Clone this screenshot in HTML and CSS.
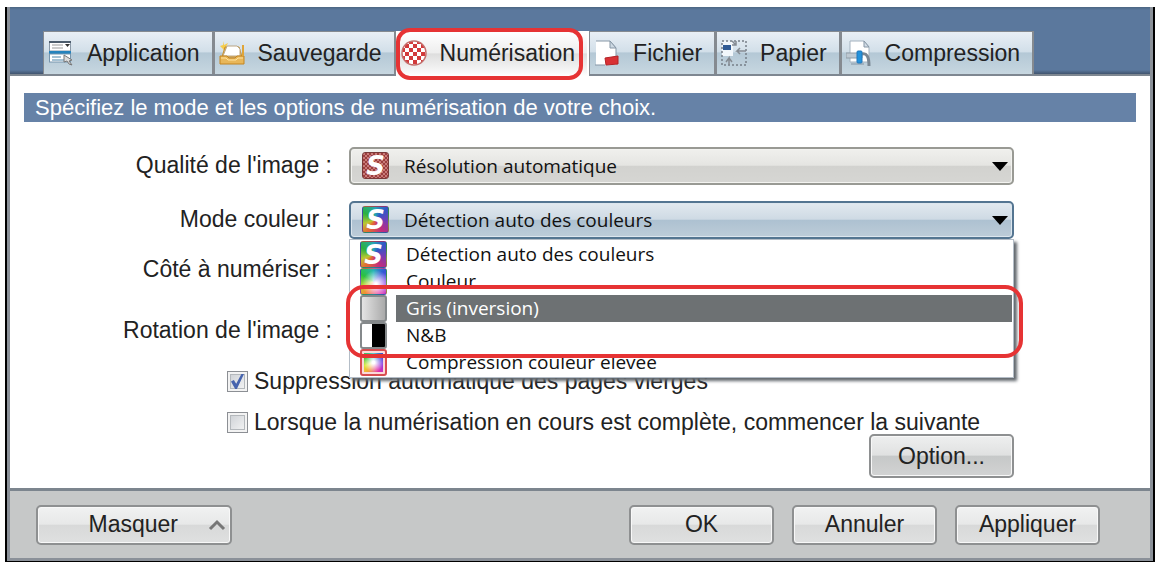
FILE: index.html
```
<!DOCTYPE html>
<html lang="fr">
<head>
    <meta charset="UTF-8">
    <meta name="viewport" content="width=device-width, initial-scale=1.0">
    <title>Numérisation</title>
    <link rel="stylesheet" href="styles.css">
</head>
<body>
    <main class="window">
        <nav class="tabs" role="tablist">
            <button type="button" class="tab" role="tab">
                <svg class="tab-icon" viewBox="0 0 26 26">
                    <rect x="1.500" y="2" width="21" height="9" fill="#fff" stroke="#8a98a6"/>
                    <path d="M1 2H23" stroke="#4c5c6c" stroke-width="2"/>
                    <path d="M4 5H15M4 8H15" stroke="#999"/>
                    <path d="M17 4h5l-2.500 3z" fill="#333"/>
                    <rect x="1" y="11" width="22" height="5" fill="#2583bd"/>
                    <rect x="1.500" y="14" width="21" height="8" fill="#fff" stroke="#7795ad"/>
                    <path d="M4 17H13M4 20H18" stroke="#4c84a8"/>
                    <path d="M16 15l8 5-3 1 3 4-3-1-2-3-3 1z" fill="#ddd" stroke="#777"/>
                </svg>
                Application
            </button>
            <button type="button" class="tab" role="tab">
                <svg class="tab-icon" viewBox="0 0 26 26">
                    <path d="M4 1l1 4 4-2-2 4 3 2-5 1-4-4 3-1z" fill="#f5cc4c"/>
                    <path d="M3 17L6 7H20L23 17Z" fill="#eebc52" stroke="#c88e2b"/>
                    <path d="M4 16L8 6H18L21 9V16Z" fill="#fff" stroke="#bba684"/>
                    <path d="M1 16H8L10 18H16L18 16H25V24H1Z" fill="#e8b75a" stroke="#c48521"/>
                    <path d="M2 18H7L9 20H17L19 18H24" fill="none" stroke="#ffe3a0"/>
                    <path d="M24 5V16" stroke="#e0a538" stroke-width="2"/>
                </svg>
                Sauvegarde
            </button>
            <button type="button" class="tab active" role="tab" aria-selected="true">
                <svg class="tab-icon" viewBox="0 0 26 26">
                    <defs>
                        <pattern id="checker" width="8" height="8" patternUnits="userSpaceOnUse">
                            <rect width="8" height="8" fill="#fff"/>
                            <rect width="4" height="4" fill="#d23a3b"/>
                            <rect x="4" y="4" width="4" height="4" fill="#d23a3b"/>
                        </pattern>
                    </defs>
                    <circle cx="13" cy="13" r="12" fill="url(#checker)" stroke="#c4706e" stroke-width="1.500"/>
                </svg>
                Numérisation
                <span class="ring ring-tab"></span>
            </button>
            <button type="button" class="tab" role="tab">
                <svg class="tab-icon" viewBox="0 0 26 26">
                    <path d="M2 1H16L22 8V25H2Z" fill="#fff"/>
                    <path d="M2 1H16L22 8V17M1 25H11" fill="none" stroke="#8797a6"/>
                    <path d="M16 1V8H22Z" fill="#cdd9e3" stroke="#8797a6"/>
                    <path d="M11 18L24 16V24L12 25Z" fill="#d93135" stroke="#b32327"/>
                </svg>
                Fichier
            </button>
            <button type="button" class="tab" role="tab">
                <svg class="tab-icon" viewBox="0 0 26 26">
                    <rect x="1" y="1" width="11" height="15" fill="#f2f7fb"/>
                    <path d="M1 1H25V25H1Z" fill="none" stroke="#777f88" stroke-width="1.500" stroke-dasharray="2 2"/>
                    <rect x="2" y="5" width="8" height="5" fill="#315b94"/>
                    <path d="M11 1l4 4M15 1v4h-4M25 11h-9l3-3M16 11l3 3M8 25v-7l-3 4M8 18l3 4" fill="none" stroke="#858b92" stroke-width="1.500"/>
                </svg>
                Papier
            </button>
            <button type="button" class="tab" role="tab">
                <svg class="tab-icon" viewBox="0 0 26 26">
                    <path d="M4 1H18L23 7V22H4Z" fill="#fff" stroke="#a4b2bf"/>
                    <path d="M18 1V7H23Z" fill="#d3dde7" stroke="#8797a6"/>
                    <path d="M5 24H18" stroke="#8494a3"/>
                    <path d="M0 13H16V18H0Z" fill="#bec9d2" stroke="#919da8"/>
                    <path d="M16 14q7-2 7 12" fill="none" stroke="#7a8793" stroke-width="3"/>
                    <rect x="11" y="11" width="5" height="12" rx="1" fill="#2493dc" stroke="#2176ba"/>
                </svg>
                Compression
            </button>
        </nav>

        <section class="panel">
            <h1 class="banner">Spécifiez le mode et les options de numérisation de votre choix.</h1>

            <form class="form" id="scanForm">
                <div class="fields">
                    <label class="label" for="quality">Qualité de l'image :</label>
                    <div class="combo">
                        <span class="icon icon-quality">S</span>
                        <select id="quality" class="select">
                            <option>Résolution automatique</option>
                        </select>
                        <span class="arrow"></span>
                    </div>

                    <label class="label" for="mode">Mode couleur :</label>
                    <div class="combo open">
                        <span class="icon icon-auto">S</span>
                        <select id="mode" class="select">
                            <option>Détection auto des couleurs</option>
                        </select>
                        <span class="arrow"></span>
                        <ul class="menu" role="listbox">
                            <li class="item" role="option"><span class="icon icon-auto">S</span><span class="item-text">Détection auto des couleurs</span></li>
                            <li class="item" role="option"><span class="icon icon-color"></span><span class="item-text">Couleur</span></li>
                            <li class="item selected" role="option"><span class="icon icon-gray"></span><span class="item-text">Gris (inversion)</span></li>
                            <li class="item" role="option"><span class="icon icon-bw"></span><span class="item-text">N&amp;B</span></li>
                            <li class="item" role="option"><span class="icon icon-high"></span><span class="item-text">Compression couleur élevée</span></li>
                        </ul>
                        <span class="ring ring-menu"></span>
                    </div>

                    <label class="label" for="side">Côté à numériser :</label>
                    <div class="combo">
                        <select id="side" class="select"></select>
                    </div>

                    <label class="label" for="rotation">Rotation de l'image :</label>
                    <div class="combo">
                        <select id="rotation" class="select"></select>
                    </div>
                </div>

                <div class="check">
                    <input type="checkbox" id="blank" checked>
                    <label for="blank">Suppression automatique des pages vierges</label>
                </div>
                <div class="check">
                    <input type="checkbox" id="next">
                    <label for="next">Lorsque la numérisation en cours est complète, commencer la suivante</label>
                </div>

                <button type="button" class="btn btn-option">Option...</button>
            </form>
        </section>

        <footer class="footer">
            <button type="button" class="btn btn-hide">
                Masquer
                <svg class="chevron" viewBox="0 0 18 12"><path d="M2 10L9 3L16 10" fill="none" stroke="#777" stroke-width="3"/></svg>
            </button>
            <div class="actions">
                <button type="button" class="btn">OK</button>
                <button type="button" class="btn">Annuler</button>
                <button type="button" class="btn">Appliquer</button>
            </div>
        </footer>
    </main>
</body>
</html>
```
FILE: styles.css
```
* {
    box-sizing: border-box;
}

body {
    font-family: "Liberation Sans", Arial, sans-serif;
    font-size: 23px;
    color: #222;
    background-color: #fff;
    margin: 0;
    padding: 7px 4px 0 5px;
}

button {
    font: inherit;
    color: inherit;
}

.window {
    border: 2px solid #000;
    border-top: none;
    box-shadow: inset 0 0 0 3px #8b9199;
    padding: 0 3px 3px;
}

/* tabs */
.tabs {
    display: flex;
    align-items: flex-end;
    height: 69px;
    padding-left: 33px;
    background: linear-gradient(#4b6683, #5b789d 3px, #5b789d 63px, #41546e 67px);
    border-bottom: 2px solid #7e8791;
}

.tab {
    position: relative;
    display: flex;
    align-items: center;
    gap: 13px;
    height: 43px;
    padding: 0 12px 0 4px;
    border: 1px solid #858a90;
    border-right-width: 2px;
    border-bottom: none;
    background: linear-gradient(#e9eff5, #d2dfe9 47%, #b4c8d6 50%, #c7d7e0);
}

.tab.active {
    height: 45px;
    margin-bottom: -2px;
    padding-bottom: 2px;
    border-color: #fff;
    background: linear-gradient(#fff, #eee 47%, #dedede 50%, #f7f7f7 90%, #fff);
}

.tab-icon {
    width: 26px;
    height: 26px;
}

/* red highlight frames */
.ring {
    position: absolute;
    border: 4px solid #e63334;
    pointer-events: none;
}

.ring-tab {
    inset: -4px 4px -4px -1px;
    border-radius: 14px;
}

.ring-menu {
    top: 84px;
    left: -3px;
    right: -9px;
    height: 73px;
    border-radius: 18px;
    z-index: 3;
}

/* panel */
.panel {
    background-color: #fff;
    padding: 17px 14px 10px;
}

.banner {
    margin: 0 0 25px;
    padding: 0 11px;
    font-size: 22px;
    font-weight: normal;
    line-height: 29px;
    color: #fff;
    background-color: #6682a7;
}

.form {
    display: flex;
    flex-direction: column;
    padding-right: 122px;
}

.fields {
    display: grid;
    grid-template-columns: 308px 1fr;
    grid-template-rows: 54px 50px 61px 49px;
    column-gap: 17px;
    align-items: start;
}

.label {
    text-align: right;
    line-height: 36px;
}

.combo {
    position: relative;
    font-family: "Open Sans", "Noto Sans", sans-serif;
    font-size: 19px;
}

.select {
    display: block;
    appearance: none;
    width: 100%;
    height: 38px;
    padding: 0 53px;
    border: 2px solid #999a94;
    border-radius: 5px;
    font: inherit;
    color: #111;
    background: linear-gradient(#f0f0ed, #e5e5e2 48%, #d2d2cf 50%, #d6d6d3);
    box-shadow: inset 0 0 0 1px #f3f3f0;
}

.open .select {
    border-color: #547591;
    background: linear-gradient(#e2e9ef, #cedae4 48%, #adc1d1 50%, #bdccd8);
    box-shadow: inset 0 0 0 1px #dce6ee;
}

.combo > .icon {
    position: absolute;
    top: 5px;
    left: 13px;
}

.arrow {
    position: absolute;
    top: 15px;
    right: 6px;
    width: 16px;
    height: 9px;
    background-color: #000;
    clip-path: polygon(0 0, 100% 0, 50% 100%);
    pointer-events: none;
}

/* colour mode list */
.menu {
    position: absolute;
    top: 38px;
    left: 0;
    right: 0;
    z-index: 2;
    margin: 0;
    padding: 1px;
    list-style: none;
    background-color: #fff;
    border: 1px solid #b4bdc7;
    box-shadow: 3px 3px 3px #62686e;
}

.item {
    display: flex;
    align-items: center;
    gap: 9px;
    height: 27px;
    padding-left: 9px;
}

.item-text {
    flex: 1;
    padding-left: 10px;
    line-height: 27px;
    color: #111;
}

.selected .item-text {
    color: #fff;
    background-color: #6d7173;
}

.icon {
    display: flex;
    align-items: center;
    justify-content: center;
    width: 27px;
    height: 27px;
    border-radius: 3px;
    font: italic bold 26px "DejaVu Sans", sans-serif;
    color: #fff;
}

.icon-quality {
    border: 1px solid #793a39;
    background: repeating-conic-gradient(#9b3e3d 0 25%, #c87b79 0 50%) 0 0 / 4px 4px;
}

.icon-auto,
.icon-color {
    border: 1px solid rgba(60, 70, 100, 0.4);
    background: conic-gradient(#25a5b6, #3157c6 45deg, #773cb5 100deg, #c12c7c 150deg, #e56b33 215deg, #b9c832 250deg, #2bb13f 300deg, #25a5b6);
}

.icon-color {
    background: radial-gradient(circle at 60% 60%, #fff 5%, rgba(255, 255, 255, 0) 65%),
        conic-gradient(#25b5b6, #3157d6 45deg, #8b3ce5 100deg, #e12caa 150deg, #f58b33 215deg, #b9d832 250deg, #2bc13f 300deg, #25b5b6);
}

.icon-gray {
    border: 2px solid #85898b;
    background: linear-gradient(90deg, #e4e4e4, #aaa);
}

.icon-bw {
    border: 2px solid #85898b;
    background: linear-gradient(90deg, #fff 45%, #000 45%);
}

.icon-high {
    border: 2px solid #d94d50;
    padding: 2px;
    background: radial-gradient(#fff 10%, rgba(255, 255, 255, 0) 75%) content-box,
        conic-gradient(#45c5c6, #3157d6 45deg, #8b3ce5 100deg, #e12caa 150deg, #f5ab33 215deg, #d9e832 250deg, #3bc13f 300deg, #45c5c6) content-box,
        #fbd9d9;
}

/* check boxes */
.check {
    display: flex;
    align-items: center;
    gap: 6px;
    height: 41px;
    padding-left: 203px;
    white-space: nowrap;
}

.check input {
    appearance: none;
    flex: none;
    width: 21px;
    height: 21px;
    margin: 0;
    border: 1px solid #8c8f94;
    background: linear-gradient(135deg, #c9cdd2, #f8f8f8);
    box-shadow: inset 0 0 0 2px #f3f3f3, inset 0 0 0 3px #b4b8bc;
}

.check input:checked::before {
    content: "";
    display: block;
    width: 13px;
    height: 15px;
    margin: 2px 3px;
    background-color: #4764ae;
    clip-path: polygon(0 50%, 22% 40%, 40% 65%, 80% 0, 100% 0, 45% 100%, 32% 100%);
}

/* buttons */
.btn {
    width: 145px;
    height: 40px;
    padding: 0;
    border: 2px solid #8e9091;
    border-radius: 5px;
    background: linear-gradient(#f1f2f2, #e7e8e8 48%, #d8d9d9 50%, #dfe0e0);
    box-shadow: inset 0 0 0 1px #f8f8f8;
}

.btn-option {
    align-self: flex-end;
    height: 44px;
    margin-top: -9px;
    background: linear-gradient(#eeefef, #e0e1e1 48%, #c6c8c8 50%, #d2d3d3);
}

.footer {
    display: flex;
    align-items: center;
    justify-content: space-between;
    height: 70px;
    padding: 0 50px 0 26px;
    border-top: 3px solid #7c858e;
    background-color: #c6c8c8;
}

.btn-hide {
    display: flex;
    align-items: center;
    justify-content: flex-end;
    gap: 30px;
    width: 196px;
    padding-right: 4px;
}

.chevron {
    width: 18px;
    height: 12px;
}

.actions {
    display: flex;
    gap: 18px;
}
```
